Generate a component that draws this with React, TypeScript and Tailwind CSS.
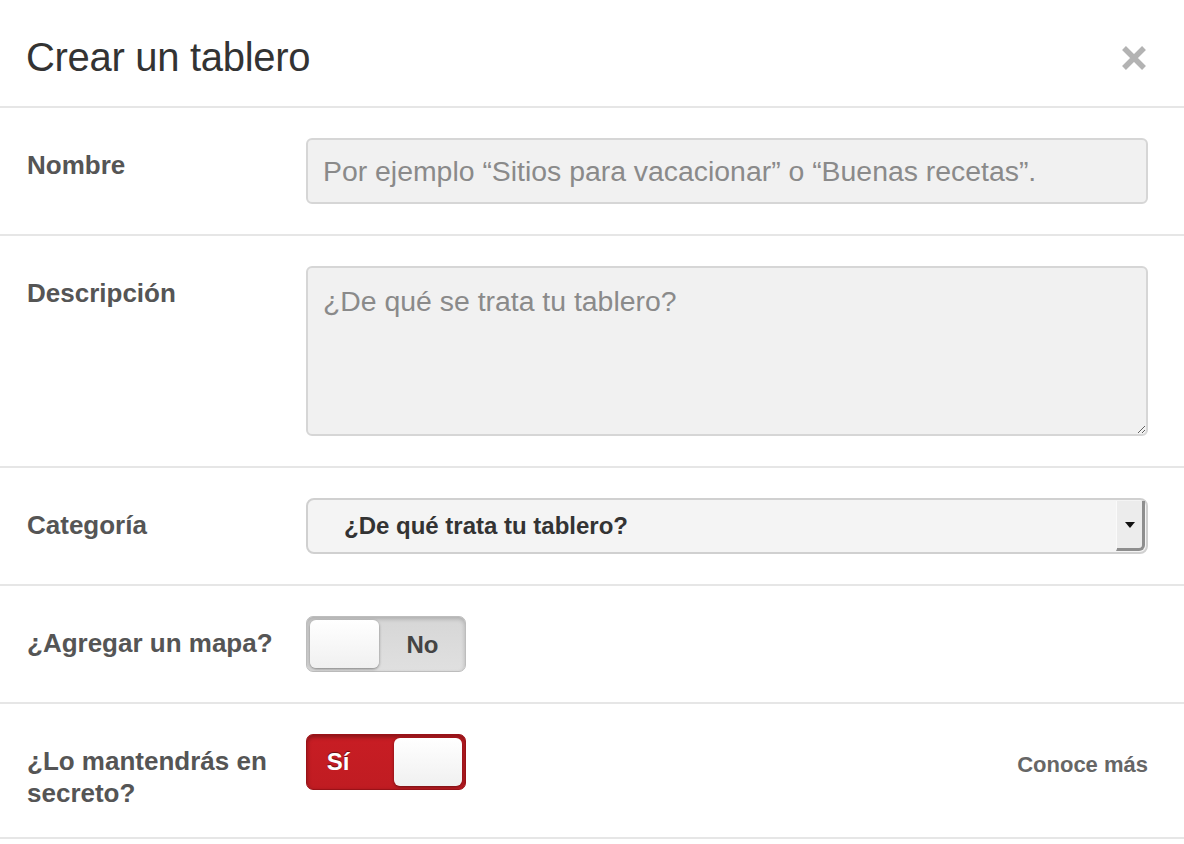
import { useState } from "react";

const font = { fontFamily: '"Liberation Sans", Arial, Helvetica, sans-serif' };

function Row({
  label,
  children,
  last,
}: {
  label: string;
  children: React.ReactNode;
  last?: boolean;
}) {
  return (
    <div
      className={
        "flex items-start pl-[27px] pr-[36px] border-b-2 border-[#e6e6e6] " +
        (last ? "pt-[30px] pb-[28px]" : "py-[30px]")
      }
    >
      <div className="w-[279px] shrink-0 pr-6 pt-[11px] text-[26px] font-bold leading-[32px] text-[#555]">
        {label}
      </div>
      <div className="flex min-w-0 flex-1 items-start">{children}</div>
    </div>
  );
}

function Toggle({ on, onChange }: { on: boolean; onChange: (v: boolean) => void }) {
  return (
    <button
      type="button"
      onClick={() => onChange(!on)}
      className={
        on
          ? "flex h-[56px] w-[160px] items-center rounded-[7px] border border-[#9a1218] bg-gradient-to-b from-[#c81d24] to-[#c01c22] p-[3px] shadow-[inset_0_2px_4px_rgba(0,0,0,0.35)]"
          : "flex h-[56px] w-[160px] items-center rounded-[7px] border border-[#bdbdbd] bg-gradient-to-b from-[#d6d6d6] to-[#e0e0e0] p-[3px] shadow-[inset_0_2px_4px_rgba(0,0,0,0.2)]"
      }
    >
      {on ? (
        <>
          <span className="flex-1 pr-[28px] text-center text-[24px] font-bold text-white [text-shadow:0_-1px_1px_rgba(0,0,0,0.5)]">
            Sí
          </span>
          <span className="h-[48px] w-[68px] rounded-[6px] bg-gradient-to-b from-white to-[#f0f0f0] shadow-[0_1px_3px_rgba(0,0,0,0.45)]" />
        </>
      ) : (
        <>
          <span className="h-[48px] w-[69px] rounded-[6px] bg-gradient-to-b from-white to-[#f0f0f0] shadow-[0_1px_3px_rgba(0,0,0,0.45)]" />
          <span className="flex-1 pl-[4px] pt-[2px] text-center text-[24px] font-bold text-[#444]">No</span>
        </>
      )}
    </button>
  );
}

export default function App() {
  const [map, setMap] = useState(false);
  const [secret, setSecret] = useState(true);

  return (
    <div className="min-h-screen bg-white" style={font}>
      <header className="flex h-[108px] items-center justify-between border-b-2 border-[#e6e6e6] pl-[26px] pr-[36px] pt-[8px]">
        <h1 className="text-[40px] font-normal leading-none tracking-[-0.3px] text-[#333]">
          Crear un tablero
        </h1>
        <button type="button" aria-label="Cerrar" className="mr-[1px] mt-[2px]">
          <svg width="26" height="26" viewBox="0 0 26 26">
            <path d="M3 3 L23 23 M23 3 L3 23" stroke="#b3b3b3" strokeWidth="5.5" strokeLinecap="butt" />
          </svg>
        </button>
      </header>

      <Row label="Nombre">
        <input
          className="h-[66px] w-full rounded-[6px] border-2 border-[#d6d6d6] bg-[#f1f1f1] px-[15px] text-[28.4px] text-[#333] outline-none placeholder:text-[#8a8a8a]"
          placeholder="Por ejemplo “Sitios para vacacionar” o “Buenas recetas”."
        />
      </Row>

      <Row label="Descripción">
        <textarea
          className="block h-[170px] w-full rounded-[6px] border-2 border-[#d6d6d6] bg-[#f1f1f1] px-[15px] pt-[16px] text-[28.4px] leading-[34px] text-[#333] outline-none placeholder:text-[#8a8a8a]"
          placeholder="¿De qué se trata tu tablero?"
        />
      </Row>

      <Row label="Categoría">
        <div className="flex h-[56px] w-full items-stretch rounded-[8px] border-2 border-[#d0d0d0] bg-[#f4f4f4]">
          <div className="flex flex-1 items-center pl-[36px] text-[24px] font-bold text-[#333]">
            ¿De qué trata tu tablero?
          </div>
          <div className="my-[1px] mr-[1px] flex w-[29px] items-center justify-center rounded-br-[6px] border-b-[3px] border-l border-r-[3px] border-b-[#8e8e8e] border-l-[#fafafa] border-r-[#8e8e8e] bg-[#ececec]">
            <svg width="10" height="6" viewBox="0 0 10 6">
              <path d="M0 0 H10 L5 6 Z" fill="#111" />
            </svg>
          </div>
        </div>
      </Row>

      <Row label="¿Agregar un mapa?">
        <Toggle on={map} onChange={setMap} />
      </Row>

      <Row label="¿Lo mantendrás en secreto?" last>
        <div className="flex w-full items-start justify-between">
          <Toggle on={secret} onChange={setSecret} />
          <a href="#" className="pt-[14px] text-[22px] font-bold text-[#666]">
            Conoce más
          </a>
        </div>
      </Row>
    </div>
  );
}
